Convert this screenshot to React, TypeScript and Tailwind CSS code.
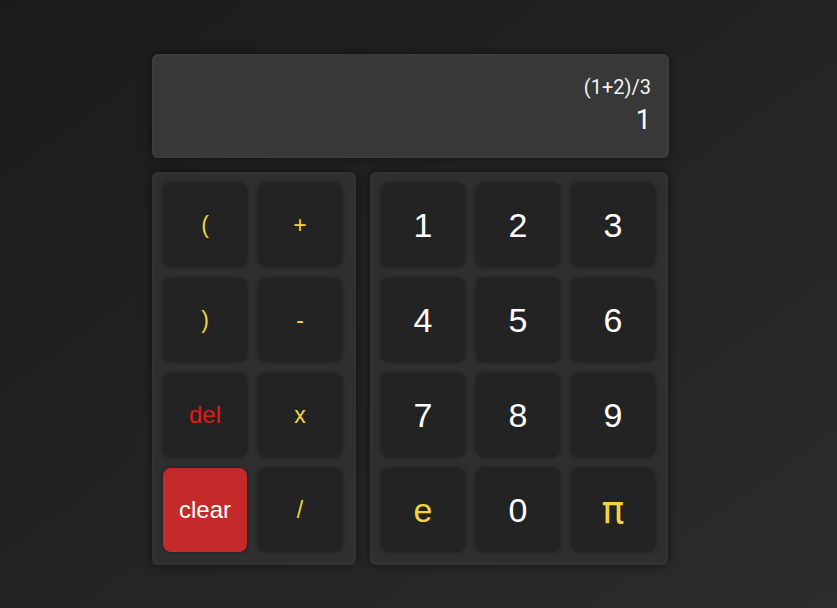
import React from 'react'

type Key = { label: string; className: string }

const opKeys: Key[] = [
  { label: '(', className: 'text-[#f3d33f] text-[23px]' },
  { label: '+', className: 'text-[#f3d33f] text-[23px]' },
  { label: ')', className: 'text-[#f3d33f] text-[23px]' },
  { label: '-', className: 'text-[#f3d33f] text-[23px]' },
  { label: 'del', className: 'text-[#e21b1b] text-[24px]' },
  { label: 'x', className: 'text-[#f3d33f] text-[23px]' },
  { label: 'clear', className: 'bg-[#c42a2a]! text-white text-[24px]' },
  { label: '/', className: 'text-[#f3d33f] text-[23px]' },
]

const numKeys: Key[] = [
  ...['1', '2', '3', '4', '5', '6', '7', '8', '9'].map((n) => ({
    label: n,
    className: 'text-white text-[34px]',
  })),
  { label: 'e', className: 'text-[#f3d33f] text-[34px]' },
  { label: '0', className: 'text-white text-[34px]' },
  { label: 'π', className: 'text-[#f3d33f] text-[38px] font-["DejaVu_Sans"]' },
]

function KeyButton({ k }: { k: Key }) {
  return (
    <button
      className={`w-[84px] h-[84px] rounded-[8px] bg-[#232323] flex items-center justify-center leading-none shadow-[0_0_4px_rgba(0,0,0,0.4)] ${k.className}`}
    >
      {k.label}
    </button>
  )
}

const panel =
  'rounded-[6px] bg-[#2f2f2f] shadow-[inset_0_0_5px_rgba(255,255,255,0.06),0_0_10px_rgba(0,0,0,0.55)]'

export default function App() {
  return (
    <div
      className="w-[837px] h-[608px] bg-gradient-to-br from-[#1b1b1b] to-[#2c2c2c] pt-[54px] pl-[152px]"
      style={{ fontFamily: '"Liberation Sans", Arial, sans-serif' }}
    >
      <div className="w-[517px] flex flex-col gap-[14px]">
        {/* Display */}
        <div
          className={`h-[104px] flex flex-col items-end pr-[18px] pt-[20px] ${panel} bg-[#383838]!`}
          style={{ fontFamily: 'Roboto, "Liberation Sans", sans-serif' }}
        >
          <div className="text-[20px] leading-[26px] text-[#f2f2f2]">(1+2)/3</div>
          <div className="text-[27px] leading-[34px] mt-[3px] text-white">1</div>
        </div>

        {/* Keypads */}
        <div className="flex gap-[14px]">
          <div className={`${panel} pt-[11px] pl-[11px] pr-[14px] pb-[13px] grid grid-cols-2 gap-[11px]`}>
            {opKeys.map((k) => (
              <KeyButton key={k.label} k={k} />
            ))}
          </div>
          <div className={`${panel} pt-[11px] pl-[11px] pr-[13px] pb-[13px] grid grid-cols-3 gap-[11px]`}>
            {numKeys.map((k) => (
              <KeyButton key={k.label} k={k} />
            ))}
          </div>
        </div>
      </div>
    </div>
  )
}
